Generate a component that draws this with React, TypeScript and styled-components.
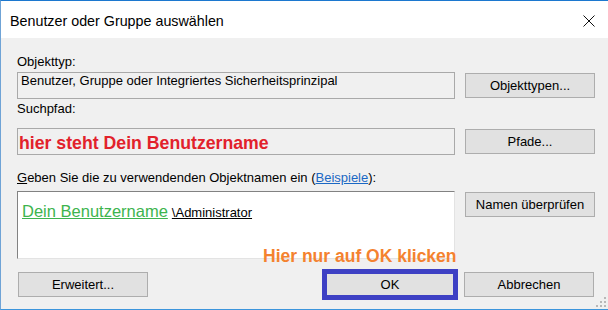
import React from 'react';
import styled, { createGlobalStyle } from 'styled-components';

const GlobalStyle = createGlobalStyle`
    html, body {
        margin: 0;
        padding: 0;
        background: #f0f0f0;
    }
`

const uiFont = `"Liberation Sans", Arial, sans-serif`;

const Window = styled.div`
    position: relative;
    width: 607px;
    height: 308px;
    overflow: hidden;
    border-top: 1px solid #1c78cf;
    border-left: 1px solid #6fa3d6;
    border-bottom: 1px solid #3c95dc;
    background: #f0f0f0;
    font-family: ${uiFont};
    font-size: 13px;
    color: #000;
    display: flex;
    flex-direction: column;
`

const TitleBar = styled.div`
    height: 37px;
    flex: 0 0 37px;
    background: #fff;
    display: flex;
    align-items: center;
    justify-content: space-between;
    padding: 2px 13px 0 9px;
    box-sizing: border-box;
`

const Title = styled.span`
    font-size: 14.3px;
    color: #000;
`

const CloseIcon = () => (
    <svg width="12" height="12" viewBox="0 0 12 12">
        <path d="M0.5 0.5 L11.5 11.5 M11.5 0.5 L0.5 11.5" stroke="#111" strokeWidth="1" fill="none" />
    </svg>
)

const Body = styled.div`
    flex: 1;
    display: flex;
    flex-direction: column;
    padding: 0 14px 0 16px;
`

const Label = styled.div<{ $gap: number }>`
    margin-top: ${p => p.$gap}px;
    height: 16px;
    line-height: 16px;
    white-space: nowrap;
`

const AccessKey = styled.span`
    text-decoration: underline;
`

const Link = styled.span`
    color: #1b68c4;
    text-decoration: underline;
`

const Row = styled.div<{ $gap: number }>`
    margin-top: ${p => p.$gap}px;
    display: grid;
    grid-template-columns: 438px 130px;
    column-gap: 10px;
    align-items: start;
`

const ReadOnlyBox = styled.div`
    height: 27px;
    box-sizing: border-box;
    border: 1px solid #a9a9a9;
    background: #f0f0f0;
    padding: 0 3px;
    line-height: 15px;
    white-space: nowrap;
    overflow: hidden;
`

const NoteBox = styled(ReadOnlyBox)`
    padding: 4px 1px 0;
    line-height: 20px;
    font-size: 17.7px;
    font-weight: bold;
    color: #e2212b;
`

const NamesBox = styled.div`
    height: 68px;
    box-sizing: border-box;
    border-style: solid;
    border-width: 1px;
    border-color: #828282 #e3e3e3 #e3e3e3 #828282;
    background: #fff;
    padding: 10px 4px 0;
    white-space: nowrap;
`

const UserName = styled.span`
    font-size: 16.5px;
    line-height: 19px;
    color: #3db44e;
    text-decoration: underline;
`

const Account = styled.span`
    font-size: 13px;
    color: #000;
    text-decoration: underline;
    margin-left: 4px;
`

const Button = styled.div<{ $offset?: number; $marked?: boolean }>`
    height: 25px;
    margin-top: ${p => p.$offset ?? 0}px;
    box-sizing: border-box;
    border: 1px solid #adadad;
    background: #e1e1e1;
    display: flex;
    align-items: center;
    justify-content: center;
    white-space: nowrap;
    outline: ${p => p.$marked ? '5px solid #3d40c4' : 'none'};
    outline-offset: -2px;
`

const Footer = styled.div`
    margin-top: 13px;
    display: grid;
    grid-template-columns: 130px 1fr 130px 130px;
    column-gap: 9px;
    padding-left: 1px;
`

const Hint = styled.div`
    position: absolute;
    left: 262px;
    top: 245px;
    font-size: 17.5px;
    line-height: 20px;
    font-weight: bold;
    color: #f4822f;
    white-space: nowrap;
`

const Grip = styled.svg`
    position: absolute;
    right: 1px;
    bottom: 1px;
`

const ResizeGrip = () => (
    <Grip width="11" height="11" viewBox="0 0 11 11">
        {[[8, 0], [4, 4], [8, 4], [0, 8], [4, 8], [8, 8]].map(([x, y]) => (
            <rect key={`${x}-${y}`} x={x} y={y} width="2" height="2" fill="#b8b8b8" />
        ))}
    </Grip>
)

export default function App() {
    return (
        <>
            <GlobalStyle />
            <Window>
                <TitleBar>
                    <Title>Benutzer oder Gruppe auswählen</Title>
                    <CloseIcon />
                </TitleBar>

                <Body>
                    <Label $gap={16}>Objekttyp:</Label>
                    <Row $gap={2}>
                        <ReadOnlyBox>Benutzer, Gruppe oder Integriertes Sicherheitsprinzipal</ReadOnlyBox>
                        <Button $offset={1}>Objekttypen...</Button>
                    </Row>

                    <Label $gap={2}>Suchpfad:</Label>
                    <Row $gap={11}>
                        <NoteBox>hier steht Dein Benutzername</NoteBox>
                        <Button $offset={1}>Pfade...</Button>
                    </Row>

                    <Label $gap={15}>
                        <AccessKey>G</AccessKey>eben Sie die zu verwendenden Objektnamen ein (<Link>Beispiele</Link>):
                    </Label>
                    <Row $gap={5}>
                        <NamesBox>
                            <UserName>Dein Benutzername</UserName>
                            <Account>\Administrator</Account>
                        </NamesBox>
                        <Button $offset={1}>Namen überprüfen</Button>
                    </Row>

                    <Footer>
                        <Button>Erweitert...</Button>
                        <span />
                        <Button $marked>OK</Button>
                        <Button>Abbrechen</Button>
                    </Footer>
                </Body>

                <Hint>Hier nur auf OK klicken</Hint>
                <ResizeGrip />
            </Window>
        </>
    );
}
